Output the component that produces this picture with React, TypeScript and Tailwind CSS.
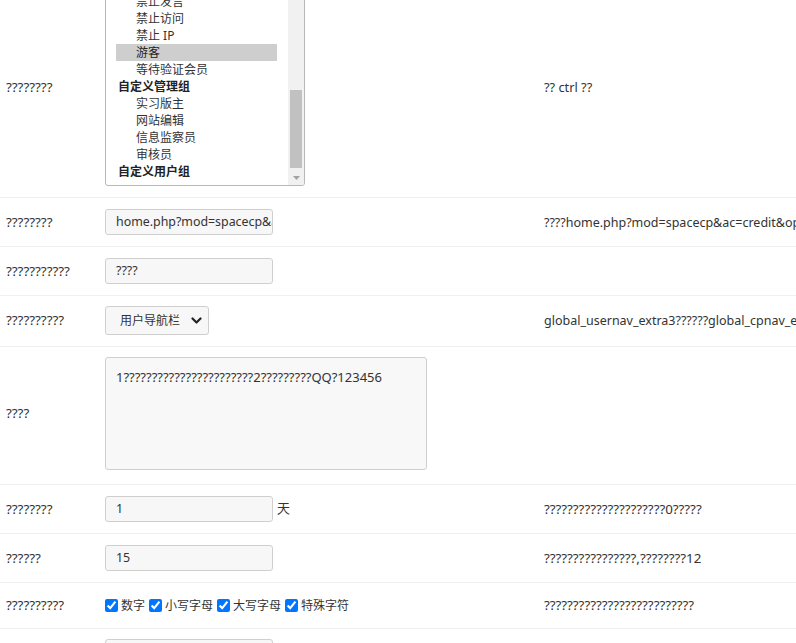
import React from "react";

const groups: { label: string; options: string[] }[] = [
  { label: "会员用户组", options: ["乞丐", "新手上路", "注册会员", "中级会员", "高级会员", "金牌会员", "论坛元老"] },
  { label: "系统用户组", options: ["管理员", "超级版主", "版主", "禁止发言", "禁止访问", "禁止 IP", "游客", "等待验证会员"] },
  { label: "自定义管理组", options: ["实习版主", "网站编辑", "信息监察员", "审核员"] },
  { label: "自定义用户组", options: [] },
];

function Row({
  label,
  tip,
  children,
  rowClass,
  tipClass = "text-[12.5px]",
}: {
  label: string;
  tip?: string;
  children: React.ReactNode;
  rowClass: string;
  tipClass?: string;
}) {
  return (
    <div className={`grid grid-cols-[100px_439px_257px] items-center border-b border-[#f0f0f0] ${rowClass}`}>
      <div className="pl-[6px] pr-[5px] text-[13.4px] leading-[17px] text-[#333] whitespace-nowrap">{label}</div>
      <div className="pl-[5px] pr-[5px] flex items-center">{children}</div>
      <div className={`pl-[5px] leading-[17px] text-[#333] whitespace-nowrap ${tipClass}`}>{tip}</div>
    </div>
  );
}

function MultiSelect() {
  return (
    <div className="w-[200px] h-[198px] border border-[#b8b8b8] rounded-[3px] bg-white flex overflow-hidden">
      <div className="flex-1 flex flex-col justify-end overflow-hidden pl-[10px] pr-[11px] pb-[5px]">
        {groups.map((g) => (
          <React.Fragment key={g.label}>
            <div className="shrink-0 h-[17px] leading-[17px] pl-[2px] text-[12px] font-bold text-[#222] whitespace-nowrap">
              {g.label}
            </div>
            {g.options.map((o) => (
              <div
                key={o}
                className={`shrink-0 h-[17px] leading-[17px] pl-[20px] text-[12px] whitespace-nowrap ${
                  o === "游客" ? "bg-[#cecece] text-[#222]" : "text-[#333]"
                }`}
              >
                {o}
              </div>
            ))}
          </React.Fragment>
        ))}
      </div>
      <div className="w-[16px] shrink-0 bg-[#f1f1f1] flex flex-col">
        <div className="h-[15px] shrink-0 flex items-center justify-center">
          <svg width="7" height="4" viewBox="0 0 7 4">
            <path d="M0 4 L3.5 0 L7 4 Z" fill="#a3a3a3" />
          </svg>
        </div>
        <div className="flex-1 flex flex-col justify-end pb-[2px] px-[2px]">
          <div className="h-[78px] bg-[#c1c1c1]" />
        </div>
        <div className="h-[15px] shrink-0 flex items-center justify-center">
          <svg width="7" height="4" viewBox="0 0 7 4">
            <path d="M0 0 L3.5 4 L7 0 Z" fill="#a3a3a3" />
          </svg>
        </div>
      </div>
    </div>
  );
}

function TextBox({ value }: { value: string }) {
  return (
    <div className="w-[168px] h-[26px] border border-[#cfcfcf] rounded-[3px] bg-[#f7f7f7] pl-[10px] pr-[2px] flex items-center overflow-hidden">
      <span className="text-[12.4px] text-[#333] whitespace-nowrap">{value}</span>
    </div>
  );
}

function Check({ label }: { label: string }) {
  return (
    <span className="inline-flex items-center mr-[4px]">
      <input type="checkbox" defaultChecked className="w-[13px] h-[13px] m-0 accent-[#0075ff]" />
      <span className="ml-[3px] text-[12px] text-[#333] leading-[17px]">{label}</span>
    </span>
  );
}

export default function App() {
  const q = (n: number) => "?".repeat(n);
  return (
    <div className="w-[796px] h-[643px] overflow-hidden bg-white font-['Noto_Sans','Noto_Sans_CJK_SC',sans-serif]">
      <Row label={q(8)} tip="?? ctrl ??" tipClass="text-[12.8px]" rowClass="-mt-[23px] py-[11px]">
        <MultiSelect />
      </Row>
      <Row label={q(8)} tip="????home.php?mod=spacecp&ac=credit&op=buy" rowClass="py-[11px]">
        <TextBox value="home.php?mod=spacecp&ac=credit&op=buy" />
      </Row>
      <Row label={q(11)} rowClass="py-[11px]">
        <TextBox value="????" />
      </Row>
      <Row label={q(10)} tip="global_usernav_extra3??????global_cpnav_extra1" rowClass="pt-[10px] pb-[11px]">
        <div className="w-[104px] h-[29px] border border-[#cfcfcf] rounded-[3px] bg-[#f7f7f7] pl-[14px] pr-[6px] flex items-center justify-between">
          <span className="text-[12px] text-[#333] whitespace-nowrap">用户导航栏</span>
          <svg width="11" height="8" viewBox="0 0 11 8">
            <path d="M1.5 1.5 L5.5 5.5 L9.5 1.5" fill="none" stroke="#222" strokeWidth="2.2" strokeLinecap="round" strokeLinejoin="round" />
          </svg>
        </div>
      </Row>
      <Row label={q(4)} rowClass="pt-[10px] pb-[14px]">
        <div className="w-[322px] h-[113px] border border-[#cfcfcf] rounded-[3px] bg-[#f8f8f8] pt-[6px] px-[10px]">
          <span className="text-[13px] leading-[17px] text-[#333] whitespace-nowrap">
            {"1" + q(23) + "2" + q(9) + "QQ?123456"}
          </span>
        </div>
      </Row>
      <Row label={q(8)} tip={q(21) + "0" + q(5)} tipClass="text-[13.3px]" rowClass="py-[11px]">
        <TextBox value="1" />
        <span className="ml-[4px] text-[13px] text-[#333]">天</span>
      </Row>
      <Row label={q(6)} tip={q(16) + "," + q(8) + "12"} tipClass="text-[13.3px]" rowClass="py-[11px]">
        <TextBox value="15" />
      </Row>
      <Row label={q(10)} tip={q(26)} tipClass="text-[13.3px]" rowClass="py-[11px]">
        <div className="h-[23px] flex items-center">
          <Check label="数字" />
          <Check label="小写字母" />
          <Check label="大写字母" />
          <Check label="特殊字符" />
        </div>
      </Row>
      <Row label="" rowClass="pt-[10px] pb-[11px]">
        <TextBox value="" />
      </Row>
    </div>
  );
}
